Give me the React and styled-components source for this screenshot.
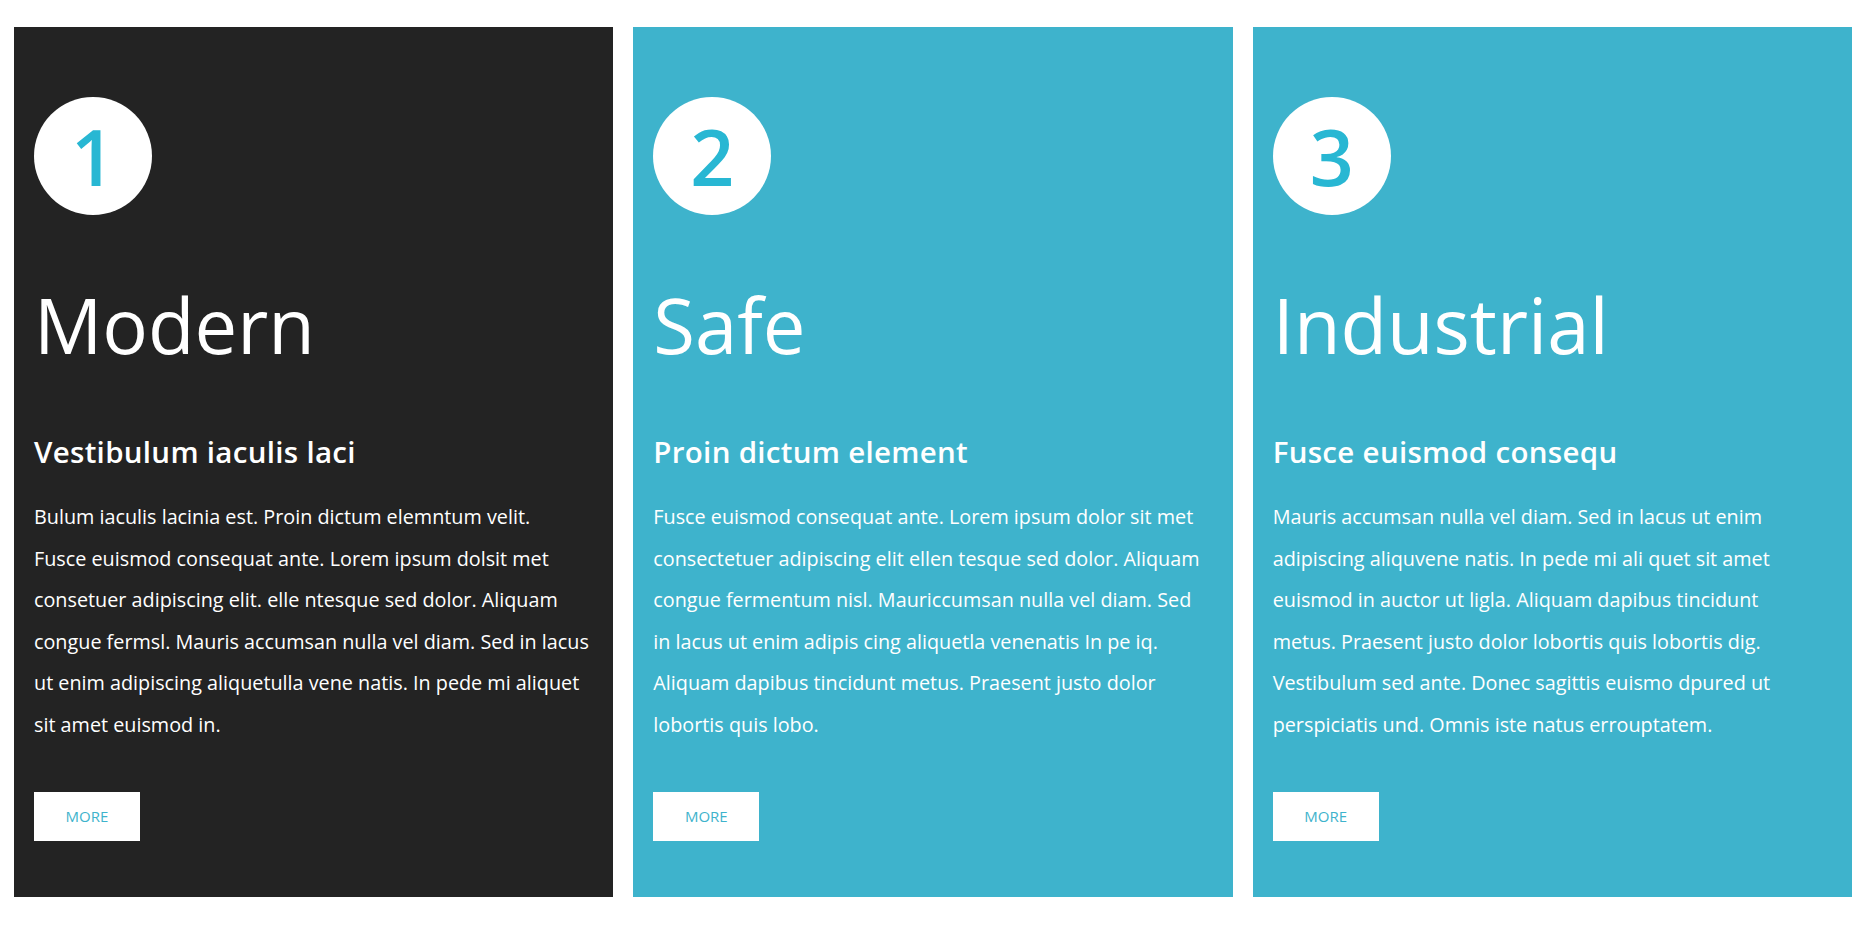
import React from "react";
import styled, { createGlobalStyle } from "styled-components";

const Global = createGlobalStyle`
  html, body { margin: 0; padding: 0; background: #ffffff; }
  body { font-family: "Open Sans", "Noto Sans", sans-serif; }
`;

const Row = styled.div`
  display: flex;
  gap: 20px;
  padding: 27px 10px 0 14px;
  align-items: stretch;
`;

const Card = styled.section`
  flex: 1 1 0;
  min-width: 0;
  background: ${(p) => (p.$dark ? "#232323" : "#3eb3cc")};
  color: #ffffff;
  padding: 70px 20px 56px 20px;
  display: flex;
  flex-direction: column;
  align-items: flex-start;
`;

const Badge = styled.div`
  width: 118px;
  height: 118px;
  border-radius: 50%;
  background: #ffffff;
  color: #28b7d3;
  display: flex;
  align-items: center;
  justify-content: center;
  font-size: 77px;
  line-height: 1;
  font-weight: 600;
`;

const Title = styled.h2`
  margin: 72px 0 0 0;
  font-size: 76px;
  line-height: 76px;
  font-weight: 400;
`;

const Subtitle = styled.h3`
  margin: 74px 0 0 0;
  font-size: 29.5px;
  line-height: 29px;
  font-weight: 600;
  letter-spacing: 0.3px;
`;

const Text = styled.p`
  margin: 30px 0 0 0;
  font-size: 19.8px;
  line-height: 41.6px;
  white-space: nowrap;
`;

const More = styled.a`
  margin-top: 46px;
  display: inline-flex;
  align-items: center;
  justify-content: center;
  width: 106px;
  height: 49px;
  background: #ffffff;
  color: #3eb3cc;
  font-size: 15px;
  text-decoration: none;
  text-transform: uppercase;
`;

const cards = [
  {
    n: 1,
    dark: true,
    title: "Modern",
    sub: "Vestibulum iaculis laci",
    lines: [
      "Bulum iaculis lacinia est. Proin dictum elemntum velit.",
      "Fusce euismod consequat ante. Lorem ipsum dolsit met",
      "consetuer adipiscing elit. elle ntesque sed dolor. Aliquam",
      "congue fermsl. Mauris accumsan nulla vel diam. Sed in lacus",
      "ut enim adipiscing aliquetulla vene natis. In pede mi aliquet",
      "sit amet euismod in.",
    ],
  },
  {
    n: 2,
    title: "Safe",
    sub: "Proin dictum element",
    lines: [
      "Fusce euismod consequat ante. Lorem ipsum dolor sit met",
      "consectetuer adipiscing elit ellen tesque sed dolor. Aliquam",
      "congue fermentum nisl. Mauriccumsan nulla vel diam. Sed",
      "in lacus ut enim adipis cing aliquetla venenatis In pe iq.",
      "Aliquam dapibus tincidunt metus. Praesent justo dolor",
      "lobortis quis lobo.",
    ],
  },
  {
    n: 3,
    title: "Industrial",
    sub: "Fusce euismod consequ",
    lines: [
      "Mauris accumsan nulla vel diam. Sed in lacus ut enim",
      "adipiscing aliquvene natis. In pede mi ali quet sit amet",
      "euismod in auctor ut ligla. Aliquam dapibus tincidunt",
      "metus. Praesent justo dolor lobortis quis lobortis dig.",
      "Vestibulum sed ante. Donec sagittis euismo dpured ut",
      "perspiciatis und. Omnis iste natus errouptatem.",
    ],
  },
];

export default function App() {
  return (
    <>
      <Global />
      <Row>
        {cards.map((c) => (
          <Card key={c.n} $dark={c.dark}>
            <Badge>{c.n}</Badge>
            <Title>{c.title}</Title>
            <Subtitle>{c.sub}</Subtitle>
            <Text>
              {c.lines.map((l, i) => (
                <React.Fragment key={i}>
                  {l}
                  {i < c.lines.length - 1 && <br />}
                </React.Fragment>
              ))}
            </Text>
            <More href="#">More</More>
          </Card>
        ))}
      </Row>
    </>
  );
}
